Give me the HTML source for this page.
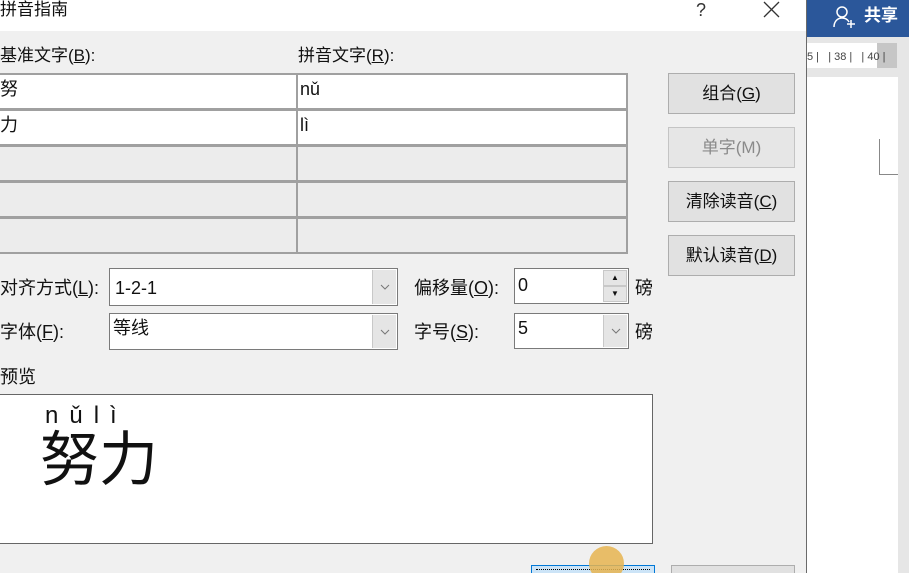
<!DOCTYPE html>
<html><head><meta charset="utf-8"><style>
*{margin:0;padding:0;box-sizing:border-box}
html,body{width:909px;height:573px;overflow:hidden}
body{background:#f0f0f0;position:relative;font-family:"Liberation Sans","Microsoft YaHei","Noto Sans CJK SC",sans-serif;font-size:17px;color:#111}
.a{position:absolute}
.t{position:absolute;white-space:nowrap;line-height:20px}
.btn{position:absolute;left:668px;width:127px;height:41px;background:#e1e1e1;border:1px solid #adadad;text-align:center;line-height:39px;font-size:17px}
.box{position:absolute;background:#fff;border:1px solid #7a7a7a}
.dd{position:absolute;top:1px;right:1px;width:24px;bottom:1px;background:#e5e5e5;border-left:1px solid #c8c8c8}
.dd svg{position:absolute;left:7px;top:50%;margin-top:-3px}
u{text-decoration:underline}
</style></head><body>
<div class="a" style="left:0;top:0;width:806px;height:31px;background:#fff"></div>
<div class="t" style="left:0;top:0;font-size:17px">拼音指南</div>
<div class="t" style="left:696px;top:0;font-size:18px;color:#333">?</div>
<svg class="a" style="left:763px;top:1px" width="17" height="17" viewBox="0 0 17 17"><path d="M1 1L16 16M16 1L1 16" stroke="#333" stroke-width="1.3"/></svg>

<div class="a" style="left:806px;top:0;width:1px;height:573px;background:#6a6a6a"></div>
<div class="a" style="left:807px;top:0;width:102px;height:37px;background:#2b579a"></div>
<svg class="a" style="left:832px;top:5px" width="26" height="24" viewBox="0 0 26 24"><circle cx="10" cy="7" r="5" fill="none" stroke="#fff" stroke-width="1.5"/><path d="M2 22c0-6 4-9 8-9s6 2 7 4" fill="none" stroke="#fff" stroke-width="1.5"/><path d="M19 15v8M15 19h8" stroke="#fff" stroke-width="1.5"/></svg>
<div class="t" style="left:864px;top:6px;color:#fff;font-size:17px;font-weight:bold">共享</div>
<div class="a" style="left:807px;top:37px;width:102px;height:536px;background:#e6e6e6"></div>
<div class="a" style="left:807px;top:43px;width:90px;height:25px;background:#fff"></div>
<div class="a" style="left:877px;top:43px;width:20px;height:25px;background:#c6c6c6"></div>
<div class="t" style="left:807px;top:47px;font-size:11px;color:#444">5 |&nbsp;&nbsp;&nbsp;| 38 |&nbsp;&nbsp;&nbsp;| 40 |</div>
<div class="a" style="left:807px;top:77px;width:91px;height:496px;background:#fff"></div>
<div class="a" style="left:879px;top:139px;width:1px;height:35px;background:#888"></div>
<div class="a" style="left:879px;top:174px;width:19px;height:1px;background:#888"></div>

<div class="t" style="left:0;top:46px">基准文字(<u>B</u>):</div>
<div class="t" style="left:298px;top:46px">拼音文字(<u>R</u>):</div>

<div class="a" style="left:0;top:73px;width:628px;height:181px;background:#a0a0a0"></div>
<div class="a" style="left:0;top:75px;width:296px;height:33px;background:#fff"></div>
<div class="a" style="left:298px;top:75px;width:328px;height:33px;background:#fff"></div>
<div class="a" style="left:0;top:111px;width:296px;height:33px;background:#fff"></div>
<div class="a" style="left:298px;top:111px;width:328px;height:33px;background:#fff"></div>
<div class="a" style="left:0;top:147px;width:296px;height:33px;background:#ececec"></div>
<div class="a" style="left:298px;top:147px;width:328px;height:33px;background:#ececec"></div>
<div class="a" style="left:0;top:183px;width:296px;height:33px;background:#ececec"></div>
<div class="a" style="left:298px;top:183px;width:328px;height:33px;background:#ececec"></div>
<div class="a" style="left:0;top:219px;width:296px;height:33px;background:#ececec"></div>
<div class="a" style="left:298px;top:219px;width:328px;height:33px;background:#ececec"></div>
<div class="t" style="left:0;top:79px;font-size:18px">努</div>
<div class="t" style="left:300px;top:79px;font-size:18px">nǔ</div>
<div class="t" style="left:0;top:115px;font-size:18px">力</div>
<div class="t" style="left:300px;top:115px;font-size:18px">lì</div>

<div class="btn" style="top:73px">组合(<u>G</u>)</div>
<div class="btn" style="top:127px;color:#8a8a8a;background:#e6e6e6;border-color:#c4c4c4">单字(M)</div>
<div class="btn" style="top:181px">清除读音(<u>C</u>)</div>
<div class="btn" style="top:235px">默认读音(<u>D</u>)</div>

<div class="t" style="left:0;top:278px;font-size:18px">对齐方式(<u>L</u>):</div>
<div class="box" style="left:109px;top:268px;width:289px;height:38px"><div class="t" style="left:5px;top:9px;font-size:18px">1-2-1</div><div class="dd"><svg width="10" height="6"><path d="M1 1l4 4 4-4" fill="none" stroke="#777"/></svg></div></div>
<div class="t" style="left:414px;top:278px;font-size:18px">偏移量(<u>O</u>):</div>
<div class="box" style="left:514px;top:268px;width:115px;height:36px"><div class="t" style="left:3px;top:6px;font-size:18px">0</div>
<div class="a" style="right:1px;top:1px;width:24px;height:16px;background:#e5e5e5;border:1px solid #c8c8c8;font-size:8px;text-align:center;line-height:14px">▲</div>
<div class="a" style="right:1px;top:17px;width:24px;height:16px;background:#e5e5e5;border:1px solid #c8c8c8;font-size:8px;text-align:center;line-height:14px">▼</div></div>
<div class="t" style="left:635px;top:278px;font-size:18px">磅</div>

<div class="t" style="left:0;top:322px;font-size:18px">字体(<u>F</u>):</div>
<div class="box" style="left:109px;top:313px;width:289px;height:37px"><div class="t" style="left:3px;top:4px;font-size:18px">等线</div><div class="dd"><svg width="10" height="6"><path d="M1 1l4 4 4-4" fill="none" stroke="#777"/></svg></div></div>
<div class="t" style="left:414px;top:322px;font-size:18px">字号(<u>S</u>):</div>
<div class="box" style="left:514px;top:313px;width:115px;height:36px"><div class="t" style="left:3px;top:4px;font-size:18px">5</div><div class="dd"><svg width="10" height="6"><path d="M1 1l4 4 4-4" fill="none" stroke="#777"/></svg></div></div>
<div class="t" style="left:635px;top:322px;font-size:18px">磅</div>

<div class="t" style="left:0;top:367px;font-size:18px">预览</div>
<div class="box" style="left:-1px;top:394px;width:654px;height:150px;border-color:#666"></div>
<div class="t" style="left:45px;top:404px;font-size:24px;letter-spacing:11px;line-height:24px">nǔlì</div>
<div class="t" style="left:40px;top:428px;font-size:59px;line-height:64px">努力</div>

<div class="a" style="left:531px;top:565px;width:124px;height:10px;background:#cce4f7;border:1px solid #0078d7"></div>
<div class="a" style="left:536px;top:569px;width:114px;height:1px;border-top:1px dotted #000"></div>
<div class="a" style="left:671px;top:565px;width:124px;height:10px;background:#e1e1e1;border:1px solid #adadad"></div>
<div class="a" style="left:589px;top:546px;width:35px;height:35px;border-radius:50%;background:rgba(230,180,80,.85)"></div>
</body></html>
